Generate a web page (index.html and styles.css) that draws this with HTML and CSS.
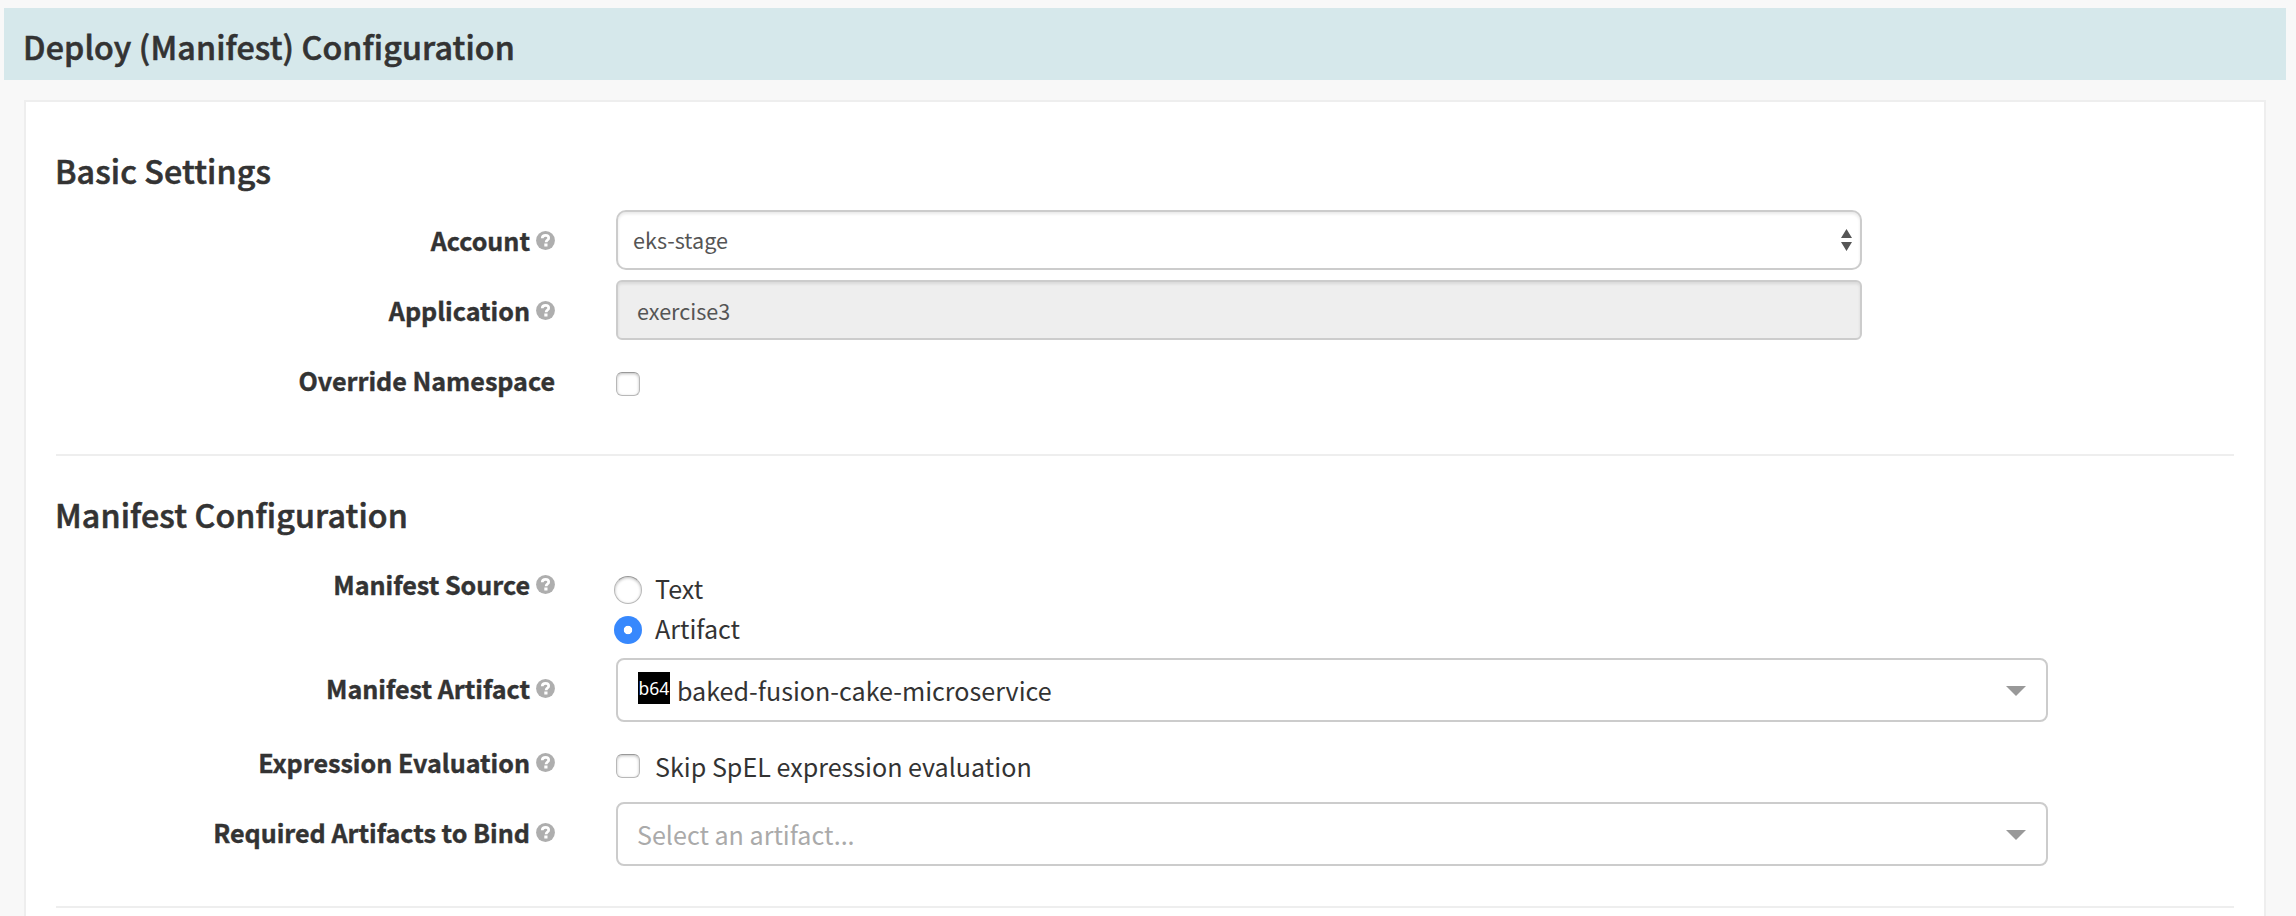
FILE: index.html
```html
<!DOCTYPE html>
<html lang="en">
<head>
<meta charset="utf-8">
<title>Deploy (Manifest) Configuration</title>
<link rel="stylesheet" href="styles.css">
</head>
<body>
<svg class="defs" width="0" height="0">
  <symbol id="help" viewBox="0 0 19 19">
    <circle cx="9.5" cy="9.5" r="9.4" fill="#aeaeae"/>
    <path d="M6.200 7.200C6.300 5.200 7.700 4.400 9.600 4.400c1.900 0 3.100 1 3.100 2.500 0 2.100-2.600 2.200-2.600 4.300" fill="none" stroke="#fff" stroke-width="2.700"/>
    <rect x="8.300" y="12.500" width="3.200" height="3" fill="#fff"/>
  </symbol>
</svg>
<header class="stage-header"><h1 class="title">Deploy (Manifest) Configuration</h1></header>
<main class="panel">
  <section class="section">
    <h2 class="heading">Basic Settings</h2>
    <div class="row">
      <div class="label"><span>Account</span><svg class="help"><use href="#help"/></svg></div>
      <div class="field select"><span>eks-stage</span>
        <svg class="updown" width="11" height="22" viewBox="0 0 11 22"><path d="M5.500 0L11 9H0zM0 13h11l-5.500 9z" fill="#555"/></svg>
      </div>
    </div>
    <div class="row">
      <div class="label"><span>Application</span><svg class="help"><use href="#help"/></svg></div>
      <div class="field readonly"><span>exercise3</span></div>
    </div>
    <div class="row row-tall">
      <div class="label"><span>Override Namespace</span></div>
      <div class="options check-only"><span class="checkbox"></span></div>
    </div>
  </section>
  <section class="section">
    <h2 class="heading">Manifest Configuration</h2>
    <div class="row row-tall">
      <div class="label"><span>Manifest Source</span><svg class="help"><use href="#help"/></svg></div>
      <div class="options radios">
        <div class="option"><span class="radio"></span><span class="option-text">Text</span></div>
        <div class="option"><span class="radio checked"></span><span class="option-text">Artifact</span></div>
      </div>
    </div>
    <div class="row">
      <div class="label"><span>Manifest Artifact</span><svg class="help"><use href="#help"/></svg></div>
      <div class="combo"><span class="b64">b64</span><span>baked-fusion-cake-microservice</span><span class="caret"></span></div>
    </div>
    <div class="row">
      <div class="label"><span>Expression Evaluation</span><svg class="help"><use href="#help"/></svg></div>
      <div class="options skip"><div class="option"><span class="checkbox"></span><span class="option-text">Skip SpEL expression evaluation</span></div></div>
    </div>
    <div class="row row-tall">
      <div class="label"><span>Required Artifacts to Bind</span><svg class="help"><use href="#help"/></svg></div>
      <div class="combo"><span class="placeholder">Select an artifact...</span><span class="caret"></span></div>
    </div>
  </section>
</main>
</body>
</html>
```
FILE: styles.css
```css
* { box-sizing: border-box; }
body {
  margin: 0;
  height: 916px;
  overflow: hidden;
  padding: 8px 10px 0 4px;
  background: #f8f8f8;
  color: #333;
  font-family: "Noto Sans CJK SC", sans-serif;
  font-size: 25.100px;
  white-space: nowrap;
}
.defs { display: block; }
.stage-header {
  height: 72px;
  padding: 16px 0 0 19px;
  background: #d6e8eb;
}
.title, .heading {
  margin: 0;
  font-size: 32.200px;
  font-weight: 500;
  line-height: 44px;
  letter-spacing: .130px;
  -webkit-text-stroke: .600px #333;
}
.panel {
  height: 840px;
  margin: 20px 20px 0;
  padding: 46px 30px 0;
  border: 2px solid #eee;
  background: #fff;
}
.heading { margin: 0 0 18px -1px; }
.section { border-bottom: 2px solid #eee; }
.section + .section { padding-top: 36px; }
.row { display: flex; gap: 61px; align-items: flex-start; margin-bottom: 10px; }
.row-tall { height: 104px; margin-bottom: 0; }
.label {
  display: flex;
  justify-content: flex-end;
  align-items: center;
  gap: 6px;
  width: 499px;
  height: 40px;
  margin-top: 10px;
  font-weight: 700;
  line-height: 40px;
  -webkit-text-stroke: .400px #333;
}
.help { width: 19px; height: 19px; -webkit-text-stroke: 0; }
.field {
  display: flex;
  align-items: center;
  justify-content: space-between;
  width: 1246px;
  height: 60px;
  border: 2px solid #ccc;
  box-shadow: inset 0 2px 3px rgba(0, 0, 0, .09);
  color: #555;
  font-size: 21.600px;
  line-height: 40px;
}
.select { padding: 0 8px 0 15px; border-radius: 10px; }
.readonly { padding: 2px 19px 0; border-radius: 6px; background: #eee; }
.options { display: flex; flex-direction: column; }
.check-only { padding-top: 22px; }
.radios { padding-top: 16px; margin-left: -2px; }
.skip { padding: 14px 0 6px; }
.option { display: flex; align-items: center; height: 40px; gap: 15px; line-height: 40px; }
.radios .option { gap: 13px; }
.option-text { margin-top: -5px; }
.skip .option-text { margin-top: 0; }
.checkbox {
  width: 24px;
  height: 24px;
  border: 1px solid #b8b8b8;
  border-top-color: #999;
  border-radius: 6px;
  background: #fff;
  box-shadow: inset 0 1px 3px rgba(0, 0, 0, .25);
}
.radio {
  width: 28px;
  height: 28px;
  border: 1px solid #b8b8b8;
  border-top-color: #999;
  border-radius: 50%;
  box-shadow: inset 0 1px 3px rgba(0, 0, 0, .25);
}
.radio.checked {
  border: 0;
  background: radial-gradient(circle at 50% 50%, #fff 0 3.800px, #3788fd 4.600px);
  box-shadow: none;
}
.combo {
  display: flex;
  align-items: center;
  width: 1432px;
  height: 64px;
  padding: 0 19px;
  border: 2px solid #ccc;
  border-radius: 8px;
  line-height: 40px;
}
.b64 {
  width: 32px;
  height: 32px;
  margin: -4px 7px 0 1px;
  background: #000;
  color: #fff;
  font-family: "Noto Sans", sans-serif;
  font-size: 17.500px;
  line-height: 32px;
  text-align: center;
}
.placeholder { color: #aaa; }
.caret {
  margin: 2px 1px 0 auto;
  border: 10px solid transparent;
  border-top-color: #999;
  border-bottom: 0;
}
```
